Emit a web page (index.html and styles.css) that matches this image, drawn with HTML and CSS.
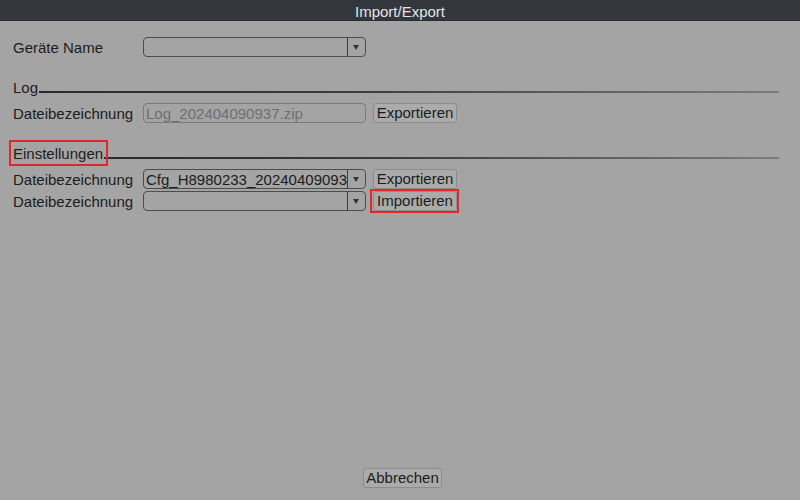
FILE: index.html
```html
<!DOCTYPE html>
<html lang="de">
<head>
<meta charset="utf-8">
<title>Import/Export</title>
<link rel="stylesheet" href="styles.css">
</head>
<body>
<div class="window">
  <div class="titlebar">Import/Export</div>
  <div class="content">
    <div class="row first">
      <span class="label">Geräte Name</span>
      <div class="select"><span class="value"></span><span class="arrow"></span></div>
    </div>

    <div class="heading"><span class="htext">Log</span><span class="hline"></span></div>
    <div class="row">
      <span class="label">Dateibezeichnung</span>
      <div class="input disabled">Log_202404090937.zip</div>
      <button class="btn">Exportieren</button>
    </div>

    <div class="heading"><span class="htext marked">Einstellungen</span><span class="hline"></span></div>
    <div class="row">
      <span class="label">Dateibezeichnung</span>
      <div class="select"><span class="value">Cfg_H8980233_20240409093</span><span class="arrow"></span></div>
      <button class="btn">Exportieren</button>
    </div>
    <div class="row tight">
      <span class="label">Dateibezeichnung</span>
      <div class="select"><span class="value"></span><span class="arrow"></span></div>
      <button class="btn highlighted">Importieren</button>
    </div>
  </div>
  <div class="footer">
    <button class="btn cancel">Abbrechen</button>
  </div>
</div>
</body>
</html>
```

FILE: styles.css
```css
html, body {
  margin: 0;
  padding: 0;
  height: 100%;
}
body {
  background: #a4a4a4;
  font-family: "Liberation Sans", Arial, sans-serif;
  font-size: 15px;
  line-height: 17px;
  color: #1c1c1c;
  overflow: hidden;
}
.window {
  display: flex;
  flex-direction: column;
  height: 500px;
}
.titlebar {
  height: 21px;
  line-height: 23px;
  background: #33363d;
  color: #e4e4e4;
  text-align: center;
  border-bottom: 1px solid #2a2c31;
  box-sizing: border-box;
}
.content {
  padding: 16px 21px 0 13px;
  display: flex;
  flex-direction: column;
}
.row {
  display: flex;
  align-items: center;
  height: 20px;
  margin-top: 7px;
}
.row.first { margin-top: 0; }
.row.tight { margin-top: 2px; }
.label {
  width: 130px;
  flex: none;
}
.select, .input {
  width: 223px;
  height: 20px;
  box-sizing: border-box;
  border: 1px solid #4c4c4c;
  border-radius: 4px;
  display: flex;
  align-items: center;
  flex: none;
  overflow: hidden;
}
.select .value {
  flex: 1;
  min-width: 0;
  white-space: nowrap;
  overflow: hidden;
  padding-left: 2px;
  height: 18px;
  line-height: 19px;
}
.select .arrow {
  flex: none;
  width: 17px;
  height: 18px;
  border-left: 1px solid #3c3c3c;
  position: relative;
}
.select .arrow::after {
  content: "";
  position: absolute;
  left: 5px;
  top: 7px;
  border-left: 3.5px solid transparent;
  border-right: 3.5px solid transparent;
  border-top: 5px solid #333;
}
.input.disabled {
  color: #6f6f6f;
  border-color: #7a7a7a;
  padding-left: 2px;
  white-space: nowrap;
}
.btn {
  margin-left: 7px;
  width: 84px;
  height: 20px;
  box-sizing: border-box;
  border: 1px solid #8c8c8c;
  border-radius: 3px;
  background: #ababab;
  font-family: inherit;
  font-size: 15px;
  color: #1c1c1c;
  padding: 0;
  line-height: 18px;
  flex: none;
}
.btn.highlighted {
  position: relative;
}
.btn.highlighted::after {
  content: "";
  position: absolute;
  left: -4px;
  right: -3px;
  top: -3px;
  bottom: -3px;
  border: 2px solid #e3262a;
}
.heading {
  display: flex;
  align-items: baseline;
  margin-top: 22px;
}
.htext {
  flex: none;
}
.htext.marked {
  position: relative;
}
.htext.marked::after {
  content: "";
  position: absolute;
  left: -4px;
  right: -5px;
  top: -5px;
  bottom: -4px;
  border: 2px solid #e3262a;
}
.hline {
  flex: 1;
  height: 2px;
  margin-left: 1px;
  background: linear-gradient(to right, #2a2a2a, #3a3a3a 40%, #6a6a6a 85%, #7c7c7c);
}
.footer {
  margin-top: auto;
  padding-bottom: 12px;
  display: flex;
  justify-content: center;
  padding-left: 5px;
}
.btn.cancel {
  margin-left: 0;
  width: 79px;
}
```
